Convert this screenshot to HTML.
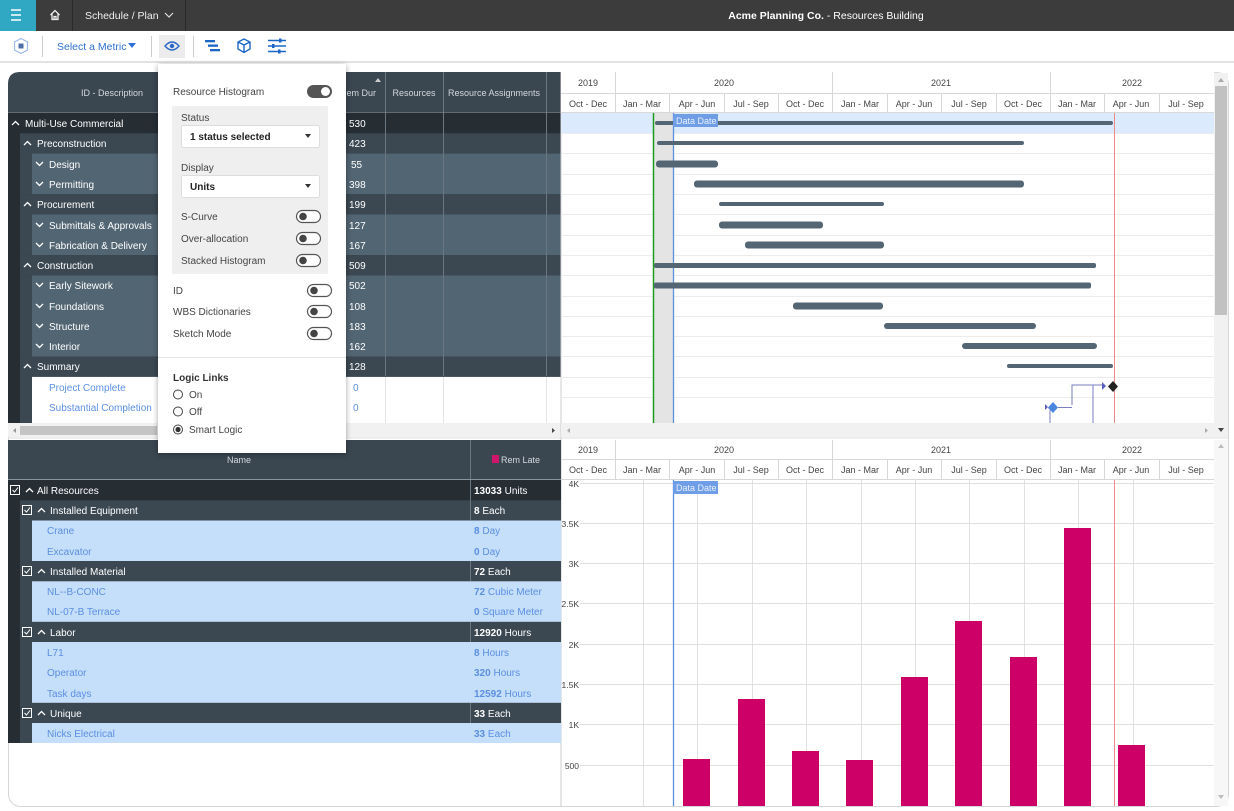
<!DOCTYPE html>
<html><head><meta charset="utf-8"><style>
*{margin:0;padding:0;box-sizing:border-box}
body{width:1234px;height:811px;overflow:hidden;background:#fff;font-family:"Liberation Sans",sans-serif;position:relative}
svg text{font-family:"Liberation Sans",sans-serif}
</style></head><body>
<svg width="1234" height="811" viewBox="0 0 1234 811" xmlns="http://www.w3.org/2000/svg" style="position:absolute;left:0;top:0">
<!-- top bar -->
<rect x="0" y="0" width="1234" height="31" fill="#3c3c3c"/>
<rect x="0" y="0" width="36" height="31" fill="#31a8c3"/>
<g stroke="#fff" stroke-width="1.5"><line x1="11" y1="10" x2="21" y2="10"/><line x1="11" y1="15" x2="21" y2="15"/><line x1="11" y1="20" x2="21" y2="20"/></g>
<path d="M50.5 15 L55 10.5 L59.5 15 M52 14 V19.5 H58 V14 M54 19.5 V16.5 H56 V19.5" fill="none" stroke="#eee" stroke-width="1.3"/>
<line x1="72.5" y1="0" x2="72.5" y2="31" stroke="#2a2a2a"/>
<line x1="185.5" y1="0" x2="185.5" y2="31" stroke="#2a2a2a"/>
<text x="85" y="19" font-size="10.5" fill="#f0f0f0">Schedule  /  Plan</text>
<path d="M165 13 L169 17 L173 13" fill="none" stroke="#ddd" stroke-width="1.2"/>
<text x="826" y="19" font-size="10.5" fill="#fff" text-anchor="middle"><tspan font-weight="bold">Acme Planning Co.</tspan> - Resources Building</text>
<!-- toolbar -->
<rect x="0" y="61" width="1234" height="2" fill="#e2e2e2"/>
<path d="M21 38.5 L27.5 42 V50 L21 53.5 L14.5 50 V42 Z" fill="none" stroke="#9ab8e6" stroke-width="1.2"/>
<rect x="18.5" y="43.5" width="5" height="5" fill="#4d6fa8"/>
<line x1="42.5" y1="36" x2="42.5" y2="57" stroke="#ccc"/>
<text x="57" y="50" font-size="10.5" fill="#2d6fd2">Select a Metric</text>
<path d="M128 43 L136 43 L132 48 Z" fill="#2d6fd2"/>
<line x1="151.5" y1="36" x2="151.5" y2="57" stroke="#ccc"/>
<rect x="159" y="35" width="26" height="23" fill="#ececec"/>
<path d="M165 46 Q172 38 179 46 Q172 54 165 46 Z" fill="none" stroke="#2a68c8" stroke-width="1.4"/>
<circle cx="172" cy="46" r="2.2" fill="#2a68c8"/>
<line x1="193.5" y1="36" x2="193.5" y2="57" stroke="#ccc"/>
<g fill="#1c66c8"><rect x="205" y="40" width="10" height="2.3"/><rect x="208" y="44.5" width="10" height="2.3"/><rect x="210" y="49" width="10" height="2.3"/></g>
<path d="M244 39 L250 42 V49 L244 52.5 L238 49 V42 Z M238 42 L244 45 L250 42 M244 45 V52.5" fill="none" stroke="#1c66c8" stroke-width="1.4"/>
<g stroke="#1c66c8" stroke-width="1.6"><line x1="268" y1="40.5" x2="286" y2="40.5"/><line x1="268" y1="46" x2="286" y2="46"/><line x1="268" y1="51.5" x2="286" y2="51.5"/></g>
<g fill="#1c66c8"><rect x="279" y="38.5" width="2.5" height="4"/><rect x="272" y="44" width="2.5" height="4"/><rect x="278" y="49.5" width="2.5" height="4"/></g>

<!-- main frame -->
<rect x="8.5" y="72.5" width="1220" height="734" rx="12" fill="#fff" stroke="#d6d6d6"/>

<!-- upper left table -->
<path d="M8 113 V84 Q8 72 20 72 H561 V113 Z" fill="#3a4650"/>
<g stroke="#6b7780"><line x1="385.5" y1="72" x2="385.5" y2="423"/><line x1="443.5" y1="72" x2="443.5" y2="423"/><line x1="546.5" y1="72" x2="546.5" y2="423"/></g>
<text x="112" y="96" font-size="9" fill="#d4dadf" text-anchor="middle">ID - Description</text>
<text x="358" y="96" font-size="9" fill="#d4dadf" text-anchor="middle">Rem Dur</text>
<path d="M375 82 L378 78 L381 82 Z" fill="#ccc"/>
<text x="414" y="96" font-size="9" fill="#d4dadf" text-anchor="middle">Resources</text>
<text x="494" y="96" font-size="9" fill="#d4dadf" text-anchor="middle">Resource Assignments</text>
<line x1="8" y1="113" x2="561" y2="113" stroke="#8a949c"/>
<g>
<rect x="8" y="113" width="553" height="310" fill="#262d33"/>
<rect x="20" y="133.3" width="541" height="20.3" fill="#3b4852"/>
<rect x="20" y="153.6" width="541" height="40.6" fill="#3b4852"/>
<rect x="32" y="153.6" width="529" height="40.6" fill="#526572"/>
<rect x="20" y="194.2" width="541" height="20.3" fill="#3b4852"/>
<rect x="20" y="214.5" width="541" height="40.6" fill="#3b4852"/>
<rect x="32" y="214.5" width="529" height="40.6" fill="#526572"/>
<rect x="20" y="255.1" width="541" height="20.3" fill="#3b4852"/>
<rect x="20" y="275.4" width="541" height="81.2" fill="#3b4852"/>
<rect x="32" y="275.4" width="529" height="81.2" fill="#526572"/>
<rect x="20" y="356.6" width="541" height="66.4" fill="#3b4852"/>
<rect x="32" y="376.9" width="529" height="46.1" fill="#fff"/>
</g>
<g stroke="#6b7780"><line x1="385.5" y1="113" x2="385.5" y2="376"/><line x1="443.5" y1="113" x2="443.5" y2="376"/><line x1="546.5" y1="113" x2="546.5" y2="376"/></g>
<g stroke="#e4e4e4"><line x1="385.5" y1="377" x2="385.5" y2="423"/><line x1="443.5" y1="377" x2="443.5" y2="423"/><line x1="546.5" y1="377" x2="546.5" y2="423"/></g>
<g font-size="10" fill="#fff">
<text x="25" y="127">Multi-Use Commercial</text>
<text x="37" y="147">Preconstruction</text>
<text x="49" y="168">Design</text>
<text x="49" y="188">Permitting</text>
<text x="37" y="208">Procurement</text>
<text x="49" y="229">Submittals &amp; Approvals</text>
<text x="49" y="249">Fabrication &amp; Delivery</text>
<text x="37" y="269">Construction</text>
<text x="49" y="289">Early Sitework</text>
<text x="49" y="310">Foundations</text>
<text x="49" y="330">Structure</text>
<text x="49" y="350">Interior</text>
<text x="37" y="370">Summary</text>
<text x="349" y="127">530</text><text x="349" y="147">423</text><text x="351" y="168">55</text><text x="349" y="188">398</text><text x="349" y="208">199</text><text x="349" y="229">127</text><text x="349" y="249">167</text><text x="349" y="269">509</text><text x="349" y="289">502</text><text x="349" y="310">108</text><text x="349" y="330">183</text><text x="349" y="350">162</text><text x="349" y="370">128</text>
</g>
<g font-size="10" fill="#5b8fe0"><text x="49" y="391">Project Complete</text><text x="49" y="411">Substantial Completion</text><text x="353" y="391">0</text><text x="353" y="411">0</text></g>
<g fill="none" stroke="#fff" stroke-width="1.3">
<path d="M12 125 L15.5 121.5 L19 125"/>
<path d="M24 145 L27.5 141.5 L31 145"/><path d="M24 206 L27.5 202.5 L31 206"/><path d="M24 267 L27.5 263.5 L31 267"/><path d="M24 368 L27.5 364.5 L31 368"/>
<path d="M36 162 L39.5 165.5 L43 162"/><path d="M36 182 L39.5 185.5 L43 182"/><path d="M36 223 L39.5 226.5 L43 223"/><path d="M36 243 L39.5 246.5 L43 243"/><path d="M36 283 L39.5 286.5 L43 283"/><path d="M36 304 L39.5 307.5 L43 304"/><path d="M36 324 L39.5 327.5 L43 324"/><path d="M36 344 L39.5 347.5 L43 344"/>
</g>
<rect x="8" y="423" width="553" height="14" fill="#f1f1f1"/>
<rect x="20" y="426" width="137" height="9" fill="#c4c4c4"/>
<path d="M16 428 L13 430.5 L16 433 Z" fill="#999"/><path d="M552 428 L555 430.5 L552 433 Z" fill="#444"/>

<!-- upper gantt -->
<line x1="561" y1="72" x2="561" y2="806" stroke="#ccc"/>
<rect x="561" y="72" width="653" height="41" fill="#fff"/>
<g stroke="#d8d8d8">
<line x1="561" y1="93.5" x2="1214" y2="93.5"/><line x1="561" y1="112.5" x2="1214" y2="112.5"/>
<line x1="615.5" y1="72" x2="615.5" y2="113"/><line x1="832.5" y1="72" x2="832.5" y2="113"/><line x1="1050.5" y1="72" x2="1050.5" y2="113"/>
<line x1="669.5" y1="93" x2="669.5" y2="113"/><line x1="724.5" y1="93" x2="724.5" y2="113"/><line x1="778.5" y1="93" x2="778.5" y2="113"/><line x1="887.5" y1="93" x2="887.5" y2="113"/><line x1="941.5" y1="93" x2="941.5" y2="113"/><line x1="996.5" y1="93" x2="996.5" y2="113"/><line x1="1104.5" y1="93" x2="1104.5" y2="113"/><line x1="1159.5" y1="93" x2="1159.5" y2="113"/>
</g>
<g font-size="9" fill="#444" text-anchor="middle">
<text x="588" y="86">2019</text><text x="724" y="86">2020</text><text x="941" y="86">2021</text><text x="1132" y="86">2022</text>
<text x="588" y="107">Oct - Dec</text><text x="642" y="107">Jan - Mar</text><text x="697" y="107">Apr - Jun</text><text x="751" y="107">Jul - Sep</text><text x="805" y="107">Oct - Dec</text><text x="860" y="107">Jan - Mar</text><text x="914" y="107">Apr - Jun</text><text x="969" y="107">Jul - Sep</text><text x="1023" y="107">Oct - Dec</text><text x="1077" y="107">Jan - Mar</text><text x="1131" y="107">Apr - Jun</text><text x="1186" y="107">Jul - Sep</text>
</g>
<rect x="561" y="113" width="653" height="20.3" fill="#dbeafc"/>
<g stroke="#ececec">
<line x1="561" y1="133.5" x2="1214" y2="133.5"/><line x1="561" y1="153.5" x2="1214" y2="153.5"/><line x1="561" y1="174.5" x2="1214" y2="174.5"/><line x1="561" y1="194.5" x2="1214" y2="194.5"/><line x1="561" y1="214.5" x2="1214" y2="214.5"/><line x1="561" y1="235.5" x2="1214" y2="235.5"/><line x1="561" y1="255.5" x2="1214" y2="255.5"/><line x1="561" y1="275.5" x2="1214" y2="275.5"/><line x1="561" y1="296.5" x2="1214" y2="296.5"/><line x1="561" y1="316.5" x2="1214" y2="316.5"/><line x1="561" y1="336.5" x2="1214" y2="336.5"/><line x1="561" y1="356.5" x2="1214" y2="356.5"/><line x1="561" y1="377.5" x2="1214" y2="377.5"/><line x1="561" y1="397.5" x2="1214" y2="397.5"/>
</g>
<rect x="654" y="113" width="19" height="310" fill="#e4e4e4"/>
<line x1="653.5" y1="113" x2="653.5" y2="423" stroke="#1a9e1a" stroke-width="1.5"/>
<line x1="673.5" y1="113" x2="673.5" y2="423" stroke="#5b8fe0" stroke-width="1.3"/>
<line x1="1114.5" y1="113" x2="1114.5" y2="423" stroke="#f08a8a"/>
<g fill="#546673">
<rect x="655" y="121" width="458" height="4" rx="2"/>
<rect x="657" y="141" width="367" height="4" rx="2"/>
<rect x="656" y="160.5" width="62" height="7" rx="3"/>
<rect x="694" y="180.5" width="330" height="7" rx="3"/>
<rect x="719" y="202" width="165" height="4" rx="2"/>
<rect x="719" y="221.5" width="104" height="7" rx="3"/>
<rect x="745" y="241.5" width="139" height="7" rx="3"/>
<rect x="654" y="263" width="442" height="5" rx="2"/>
<rect x="654" y="282.5" width="437" height="6" rx="2"/>
<rect x="793" y="302.5" width="90" height="7" rx="3"/>
<rect x="884" y="323" width="152" height="6" rx="3"/>
<rect x="962" y="343" width="135" height="6" rx="3"/>
<rect x="1007" y="364" width="106" height="4" rx="2"/>
</g>
<rect x="673" y="114" width="45" height="13" fill="#6f9ee6"/>
<text x="676" y="124" font-size="9" fill="#e8f0fc">Data Date</text>
<path d="M1072 405 V385 H1103 M1093 385 V423 M1050 423 V408 H1048" fill="none" stroke="#7a7ec0" stroke-width="1"/>
<path d="M1102 382 L1106 386 L1102 390 Z M1045 404 L1048 407 L1045 410 Z" fill="#5a5fc0"/>
<path d="M1113 381 L1118 386.5 L1113 392 L1108 386.5 Z" fill="#222"/>
<path d="M1053 402 L1058 407.5 L1053 413 L1048 407.5 Z" fill="#4a86e0"/>
<line x1="1058" y1="407.5" x2="1072" y2="407.5" stroke="#7a7ec0"/>
<rect x="561" y="423" width="653" height="14" fill="#f1f1f1"/>
<path d="M570 428 L567 430.5 L570 433 Z" fill="#aaa"/><path d="M1205 428 L1208 430.5 L1205 433 Z" fill="#aaa"/>
<rect x="1214" y="73" width="14" height="364" fill="#f1f1f1"/>
<rect x="1215" y="86" width="12" height="229" fill="#c1c1c1"/>
<path d="M1218 82 L1221 78 L1224 82 Z" fill="#aaa"/><path d="M1218 428 L1221 432 L1224 428 Z" fill="#444"/>
<line x1="8" y1="438" x2="1228" y2="438" stroke="#ddd"/>

<!-- lower left table -->
<rect x="8" y="440" width="553" height="40" fill="#3a4650"/>
<line x1="470.5" y1="440" x2="470.5" y2="743" stroke="#6b7780"/>
<line x1="8" y1="479.5" x2="561" y2="479.5" stroke="#8a949c"/>
<text x="239" y="463" font-size="9" fill="#d4dadf" text-anchor="middle">Name</text>
<rect x="492" y="455" width="7" height="8" fill="#d0156c"/>
<text x="501" y="463" font-size="9" fill="#d4dadf">Rem Late</text>
<rect x="8" y="480" width="553" height="263" fill="#262d33"/>
<rect x="20" y="500.3" width="541" height="242.7" fill="#3b4852"/>
<rect x="32" y="520.5" width="529" height="40.5" fill="#c5defa"/>
<rect x="32" y="581.3" width="529" height="40.5" fill="#c5defa"/>
<rect x="32" y="642" width="529" height="60.8" fill="#c5defa"/>
<rect x="32" y="723" width="529" height="20" fill="#c5defa"/>
<g stroke="#6b7780"><line x1="470.5" y1="480" x2="470.5" y2="520"/><line x1="470.5" y1="561" x2="470.5" y2="581"/><line x1="470.5" y1="622" x2="470.5" y2="642"/><line x1="470.5" y1="703" x2="470.5" y2="723"/></g>
<g stroke="#fff" fill="none" stroke-width="1">
<rect x="10.5" y="485.5" width="9" height="9"/><rect x="22.5" y="505.5" width="9" height="9"/><rect x="22.5" y="566.5" width="9" height="9"/><rect x="22.5" y="627.5" width="9" height="9"/><rect x="22.5" y="708.5" width="9" height="9"/>
<path d="M12.5 490 L14.5 492 L18 487.5"/><path d="M24.5 510 L26.5 512 L30 507.5"/><path d="M24.5 571 L26.5 573 L30 568.5"/><path d="M24.5 632 L26.5 634 L30 629.5"/><path d="M24.5 713 L26.5 715 L30 710.5"/>
</g>
<g fill="none" stroke="#fff" stroke-width="1.3">
<path d="M26 492 L29.5 488.5 L33 492"/><path d="M38 512 L41.5 508.5 L45 512"/><path d="M38 573 L41.5 569.5 L45 573"/><path d="M38 634 L41.5 630.5 L45 634"/><path d="M38 715 L41.5 711.5 L45 715"/>
</g>
<g font-size="10" fill="#fff">
<text x="37" y="494">All Resources</text><text x="50" y="514">Installed Equipment</text><text x="50" y="575">Installed Material</text><text x="50" y="636">Labor</text><text x="50" y="717">Unique</text>
<text x="474" y="494"><tspan font-weight="bold">13033</tspan> Units</text><text x="474" y="514"><tspan font-weight="bold">8</tspan> Each</text><text x="474" y="575"><tspan font-weight="bold">72</tspan> Each</text><text x="474" y="636"><tspan font-weight="bold">12920</tspan> Hours</text><text x="474" y="717"><tspan font-weight="bold">33</tspan> Each</text>
</g>
<g font-size="10" fill="#5b8fe0">
<text x="47" y="534">Crane</text><text x="47" y="555">Excavator</text><text x="47" y="595">NL--B-CONC</text><text x="47" y="615">NL-07-B Terrace</text><text x="47" y="656">L71</text><text x="47" y="676">Operator</text><text x="47" y="697">Task days</text><text x="47" y="737">Nicks Electrical</text>
<text x="474" y="534"><tspan font-weight="bold">8</tspan> Day</text><text x="474" y="555"><tspan font-weight="bold">0</tspan> Day</text><text x="474" y="595"><tspan font-weight="bold">72</tspan> Cubic Meter</text><text x="474" y="615"><tspan font-weight="bold">0</tspan> Square Meter</text><text x="474" y="656"><tspan font-weight="bold">8</tspan> Hours</text><text x="474" y="676"><tspan font-weight="bold">320</tspan> Hours</text><text x="474" y="697"><tspan font-weight="bold">12592</tspan> Hours</text><text x="474" y="737"><tspan font-weight="bold">33</tspan> Each</text>
</g>

<!-- lower gantt header -->
<g stroke="#d8d8d8">
<line x1="561" y1="459.5" x2="1214" y2="459.5"/><line x1="561" y1="479.5" x2="1214" y2="479.5"/>
<line x1="615.5" y1="440" x2="615.5" y2="480"/><line x1="832.5" y1="440" x2="832.5" y2="480"/><line x1="1050.5" y1="440" x2="1050.5" y2="480"/>
<line x1="669.5" y1="459" x2="669.5" y2="480"/><line x1="724.5" y1="459" x2="724.5" y2="480"/><line x1="778.5" y1="459" x2="778.5" y2="480"/><line x1="887.5" y1="459" x2="887.5" y2="480"/><line x1="941.5" y1="459" x2="941.5" y2="480"/><line x1="996.5" y1="459" x2="996.5" y2="480"/><line x1="1104.5" y1="459" x2="1104.5" y2="480"/><line x1="1159.5" y1="459" x2="1159.5" y2="480"/>
</g>
<g font-size="9" fill="#444" text-anchor="middle">
<text x="588" y="453">2019</text><text x="724" y="453">2020</text><text x="941" y="453">2021</text><text x="1132" y="453">2022</text>
<text x="588" y="473">Oct - Dec</text><text x="642" y="473">Jan - Mar</text><text x="697" y="473">Apr - Jun</text><text x="751" y="473">Jul - Sep</text><text x="805" y="473">Oct - Dec</text><text x="860" y="473">Jan - Mar</text><text x="914" y="473">Apr - Jun</text><text x="969" y="473">Jul - Sep</text><text x="1023" y="473">Oct - Dec</text><text x="1077" y="473">Jan - Mar</text><text x="1131" y="473">Apr - Jun</text><text x="1186" y="473">Jul - Sep</text>
</g>
<g stroke="#e0e0e0">
<line x1="580" y1="483.5" x2="1214" y2="483.5"/><line x1="580" y1="523.5" x2="1214" y2="523.5"/><line x1="580" y1="563.5" x2="1214" y2="563.5"/><line x1="580" y1="603.5" x2="1214" y2="603.5"/><line x1="580" y1="644.5" x2="1214" y2="644.5"/><line x1="580" y1="684.5" x2="1214" y2="684.5"/><line x1="580" y1="724.5" x2="1214" y2="724.5"/><line x1="580" y1="765.5" x2="1214" y2="765.5"/>
<line x1="643.5" y1="480" x2="643.5" y2="806"/><line x1="697.5" y1="480" x2="697.5" y2="806"/><line x1="752.5" y1="480" x2="752.5" y2="806"/><line x1="806.5" y1="480" x2="806.5" y2="806"/><line x1="861.5" y1="480" x2="861.5" y2="806"/><line x1="915.5" y1="480" x2="915.5" y2="806"/><line x1="969.5" y1="480" x2="969.5" y2="806"/><line x1="1024.5" y1="480" x2="1024.5" y2="806"/><line x1="1078.5" y1="480" x2="1078.5" y2="806"/><line x1="1133.5" y1="480" x2="1133.5" y2="806"/>
</g>
<g font-size="8.5" fill="#444" text-anchor="end">
<text x="579" y="487">4K</text><text x="579" y="527">3.5K</text><text x="579" y="567">3K</text><text x="579" y="607">2.5K</text><text x="579" y="648">2K</text><text x="579" y="688">1.5K</text><text x="579" y="728">1K</text><text x="579" y="769">500</text>
</g>
<line x1="673.5" y1="480" x2="673.5" y2="806" stroke="#5b8fe0" stroke-width="1.3"/>
<line x1="1114.5" y1="480" x2="1114.5" y2="806" stroke="#f08a8a"/>
<rect x="673" y="481" width="45" height="13" fill="#6f9ee6"/>
<text x="676" y="491" font-size="9" fill="#e8f0fc">Data Date</text>
<g fill="#cc0066">
<rect x="683" y="759" width="27" height="47"/><rect x="738" y="699" width="27" height="107"/><rect x="792" y="751" width="27" height="55"/><rect x="846" y="760" width="27" height="46"/><rect x="901" y="677" width="27" height="129"/><rect x="955" y="621" width="27" height="185"/><rect x="1010" y="657" width="27" height="149"/><rect x="1064" y="528" width="27" height="278"/><rect x="1118" y="745" width="27" height="61"/>
</g>
<rect x="1214" y="440" width="14" height="366" fill="#f7f7f7"/>
<path d="M1218 448 L1221 444 L1224 448 Z" fill="#bbb"/><path d="M1218 795 L1221 799 L1224 795 Z" fill="#bbb"/>

<!-- popup -->
<rect x="158" y="64" width="188" height="389" fill="#fff" style="filter:drop-shadow(0 1px 3px rgba(0,0,0,.35))"/>
<text x="173" y="95" font-size="10" fill="#444">Resource Histogram</text>
<rect x="307" y="85" width="25" height="13" rx="6.5" fill="#555"/><circle cx="325.5" cy="91.5" r="4.5" fill="#fff"/>
<rect x="172" y="106" width="156" height="168" rx="2" fill="#efefef"/>
<text x="181" y="121" font-size="10" fill="#444">Status</text>
<rect x="181.5" y="125.5" width="138" height="22" rx="2" fill="#fff" stroke="#ddd"/>
<text x="190" y="140" font-size="10" font-weight="bold" fill="#222">1 status selected</text>
<path d="M305 134 L311 134 L308 138 Z" fill="#333"/>
<text x="181" y="171" font-size="10" fill="#444">Display</text>
<rect x="181.5" y="175.5" width="138" height="22" rx="2" fill="#fff" stroke="#ddd"/>
<text x="190" y="190" font-size="10" font-weight="bold" fill="#222">Units</text>
<path d="M305 184 L311 184 L308 188 Z" fill="#333"/>
<g font-size="10" fill="#444"><text x="181" y="220">S-Curve</text><text x="181" y="242">Over-allocation</text><text x="181" y="264">Stacked Histogram</text>
<text x="173" y="294">ID</text><text x="173" y="315">WBS Dictionaries</text><text x="173" y="337">Sketch Mode</text></g>
<g fill="#fff" stroke="#555" stroke-width="1.2">
<rect x="296.5" y="210.5" width="24" height="12" rx="6"/><rect x="296.5" y="232.5" width="24" height="12" rx="6"/><rect x="296.5" y="254.5" width="24" height="12" rx="6"/>
<rect x="307.5" y="284.5" width="24" height="12" rx="6"/><rect x="307.5" y="305.5" width="24" height="12" rx="6"/><rect x="307.5" y="327.5" width="24" height="12" rx="6"/>
</g>
<g fill="#444"><circle cx="303" cy="216.5" r="3.8"/><circle cx="303" cy="238.5" r="3.8"/><circle cx="303" cy="260.5" r="3.8"/><circle cx="314" cy="290.5" r="3.8"/><circle cx="314" cy="311.5" r="3.8"/><circle cx="314" cy="333.5" r="3.8"/></g>
<line x1="158" y1="357.5" x2="346" y2="357.5" stroke="#e4e4e4"/>
<text x="173" y="381" font-size="10" font-weight="bold" fill="#333">Logic Links</text>
<g fill="#fff" stroke="#444"><circle cx="178" cy="394.5" r="4.5"/><circle cx="178" cy="411.5" r="4.5"/><circle cx="178" cy="429.5" r="4.5"/></g>
<circle cx="178" cy="429.5" r="2.6" fill="#333"/>
<g font-size="10" fill="#444"><text x="189" y="398">On</text><text x="189" y="415">Off</text><text x="189" y="433">Smart Logic</text></g>
</svg>
</body></html>
